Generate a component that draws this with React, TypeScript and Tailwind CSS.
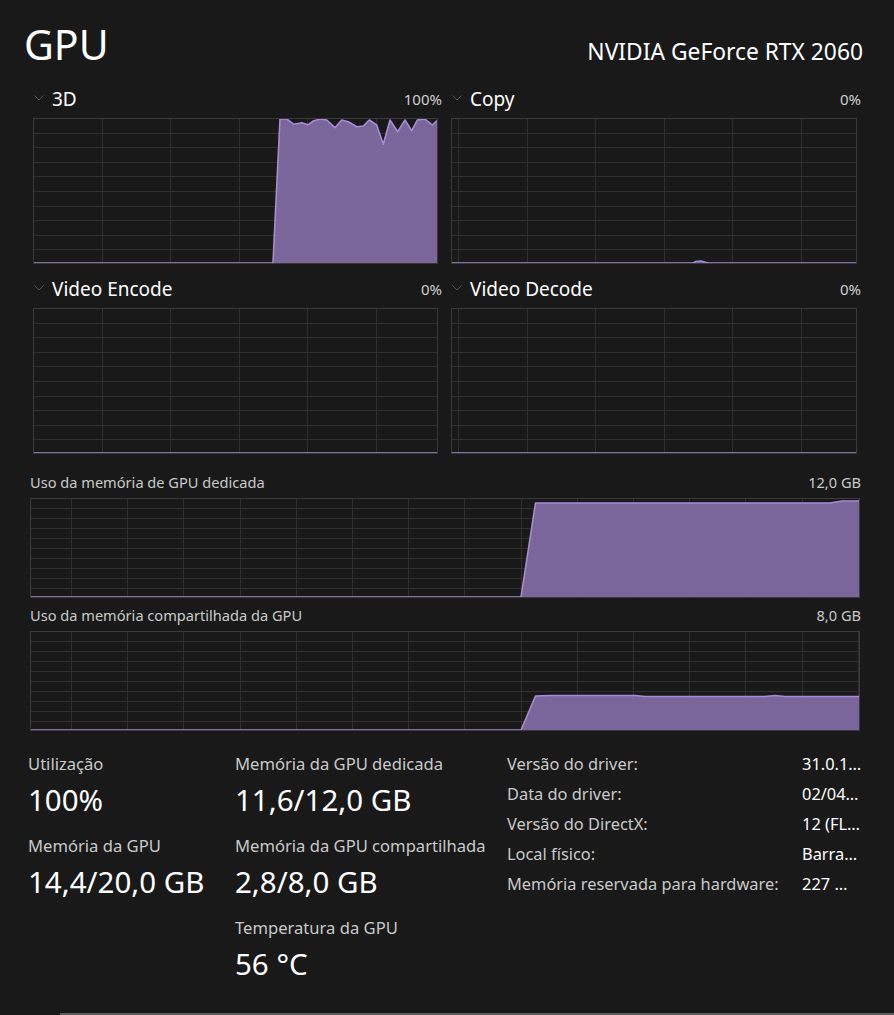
import React from "react";

type Pt = [number, number];

interface GraphProps {
  width: number;
  height: number;
  cols: number; // spacing of vertical grid lines
  offset: number; // where the first vertical line sits
  rows: number;
  points: Pt[];
}

const Graph: React.FC<GraphProps> = ({ width, height, cols, offset, rows, points }) => {
  const vLines: number[] = [];
  for (let x = offset; x < width - 2; x += cols) vLines.push(Math.round(x));
  const hLines: number[] = [];
  for (let i = 1; i < rows; i++) hLines.push(Math.round((height * i) / rows));

  const poly = [[0, height - 1] as Pt, ...points, [width - 1, height - 1] as Pt];
  const fill = poly.map(([x, y]) => `${x},${y}`).join(" ");
  const line = points.map(([x, y]) => `${x},${y}`).join(" ");

  return (
    <svg width={width} height={height} className="block">
      {vLines.map((x) => (
        <line key={"v" + x} x1={x + 0.5} y1={0} x2={x + 0.5} y2={height} stroke="#2f2f2f" />
      ))}
      {hLines.map((y) => (
        <line key={"h" + y} x1={0} y1={y + 0.5} x2={width} y2={y + 0.5} stroke="#2f2f2f" />
      ))}
      <polygon points={fill} fill="#7f69a1" fillOpacity={0.96} />
      <polyline points={line} fill="none" stroke="#a68bd6" strokeWidth={1.6} strokeLinejoin="round" />
      <rect x={0.5} y={0.5} width={width - 1} height={height - 1} fill="none" stroke="#3a3a3a" />
    </svg>
  );
};

const Chevron = () => (
  <svg width="10" height="6" viewBox="0 0 10 6" className="block">
    <polyline points="0.5,0.5 5,5 9.5,0.5" fill="none" stroke="#555" strokeWidth="1" />
  </svg>
);

interface EngineProps {
  title: string;
  value: string;
  offset: number;
  points: Pt[];
  width: number;
}

const Engine: React.FC<EngineProps> = ({ title, value, offset, points, width }) => (
  <div className="flex flex-col">
    <div className="h-[24px] flex items-center justify-between" style={{ width: width + 4 }}>
      <div className="flex items-center">
        <div className="ml-[1px] w-[18px] -mt-[3px]">
          <Chevron />
        </div>
        <span className="text-[19px] leading-[24px] text-white">{title}</span>
      </div>
      <span className="text-[15px] leading-[24px] text-[#cfcfcf]">{value}</span>
    </div>
    <div className="mt-[7px]">
      <Graph width={width} height={146} cols={68.6} offset={offset} rows={10} points={points} />
    </div>
  </div>
);

const flat = (w: number, h: number): Pt[] => [
  [0, h - 1],
  [w - 1, h - 1],
];

const H = 146;
const load3d: Pt[] = [
  [0, H - 1], [240, H - 1], [247, 1], [253.7, 1], [261, 6.3], [268.7, 4.7], [275.3, 6.7],
  [280.3, 3], [287, 1], [293.7, 2], [302, 9.7], [308.7, 2], [315.3, 3.7], [323.7, 8.7],
  [330.3, 8], [336.3, 2], [343.7, 7], [350.3, 26.3], [357, 2], [364.7, 13.7], [372, 2],
  [378.7, 12.7], [384.3, 2], [392, 1], [399.3, 7], [404, 2.7],
];
const loadCopy: Pt[] = [
  [0, H - 1], [242, H - 1], [245, H - 2.5], [250, H - 3], [255, H - 1.5], [258, H - 1], [405, H - 1],
];

const M = 100;
const dedicated: Pt[] = [
  [0, M - 1], [491, M - 1], [505.5, 5], [800, 5], [812, 3], [829, 3],
];
const shared: Pt[] = [
  [0, M - 1], [491, M - 1], [505.5, 65], [520, 64.5], [605, 64.5], [615, 65.5],
  [735, 65.5], [745, 64.5], [755, 65.5], [829, 65.5],
];

const Stat: React.FC<{ label: string; value: string }> = ({ label, value }) => (
  <div className="flex flex-col mb-[15px]">
    <span className="text-[16.6px] leading-[22px] text-[#c9c9c9] whitespace-nowrap">{label}</span>
    <span className="mt-[5px] text-[29.5px] leading-[40px] text-white whitespace-nowrap">{value}</span>
  </div>
);

const props: [string, string][] = [
  ["Versão do driver:", "31.0.1…"],
  ["Data do driver:", "02/04…"],
  ["Versão do DirectX:", "12 (FL…"],
  ["Local físico:", "Barra…"],
  ["Memória reservada para hardware:", "227 …"],
];

export default function App() {
  return (
    <div className="w-[894px] h-[1015px] bg-[#191919] text-white relative overflow-hidden font-['Noto_Sans','Open_Sans',sans-serif]">
      {/* header */}
      <div className="flex items-baseline justify-between pl-[24px] pr-[31px] pt-[20px]">
        <h1 className="text-[41px] leading-[48px] font-normal">GPU</h1>
        <span className="text-[22.8px] leading-[30px]">NVIDIA GeForce RTX 2060</span>
      </div>

      {/* engines */}
      <div className="mt-[19px] pl-[33px] grid grid-cols-[405px_406px] gap-x-[13px] gap-y-[13px]">
        <Engine title="3D" value="100%" offset={68.6} points={load3d} width={405} />
        <Engine title="Copy" value="0%" offset={7} points={loadCopy} width={406} />
        <Engine title="Video Encode" value="0%" offset={68.6} points={flat(405, H)} width={405} />
        <Engine title="Video Decode" value="0%" offset={7} points={flat(406, H)} width={406} />
      </div>

      {/* memory */}
      <div className="pl-[30px] w-[861px] mt-[19px] flex flex-col">
        <div className="h-[20px] flex items-center justify-between text-[14.6px] text-[#c9c9c9]">
          <span>Uso da memória de GPU dedicada</span>
          <span>12,0 GB</span>
        </div>
        <div className="mt-[5px]">
          <Graph width={830} height={M} cols={56.2} offset={41} rows={10} points={dedicated} />
        </div>
        <div className="mt-[8px] h-[20px] flex items-center justify-between text-[14.6px] text-[#c9c9c9]">
          <span>Uso da memória compartilhada da GPU</span>
          <span>8,0 GB</span>
        </div>
        <div className="mt-[5px]">
          <Graph width={830} height={M} cols={56.2} offset={41} rows={10} points={shared} />
        </div>
      </div>

      {/* stats */}
      <div className="mt-[22px] pl-[28px] flex items-start">
        <div className="w-[207px] flex flex-col">
          <Stat label="Utilização" value="100%" />
          <Stat label="Memória da GPU" value="14,4/20,0 GB" />
        </div>
        <div className="w-[272px] flex flex-col">
          <Stat label="Memória da GPU dedicada" value="11,6/12,0 GB" />
          <Stat label="Memória da GPU compartilhada" value="2,8/8,0 GB" />
          <Stat label="Temperatura da GPU" value="56 °C" />
        </div>
        <div className="-mt-[4px] grid grid-cols-[295px_auto] content-start text-[16.4px] leading-[30px]">
          {props.map(([k, v]) => (
            <React.Fragment key={k}>
              <span className="text-[#c9c9c9] whitespace-nowrap">{k}</span>
              <span className="text-white whitespace-nowrap">{v}</span>
            </React.Fragment>
          ))}
        </div>
      </div>

      {/* scrollbar line */}
      <div className="absolute bottom-0 left-[60px] right-0 h-[2px] bg-[#5c5c5c]" />
    </div>
  );
}
